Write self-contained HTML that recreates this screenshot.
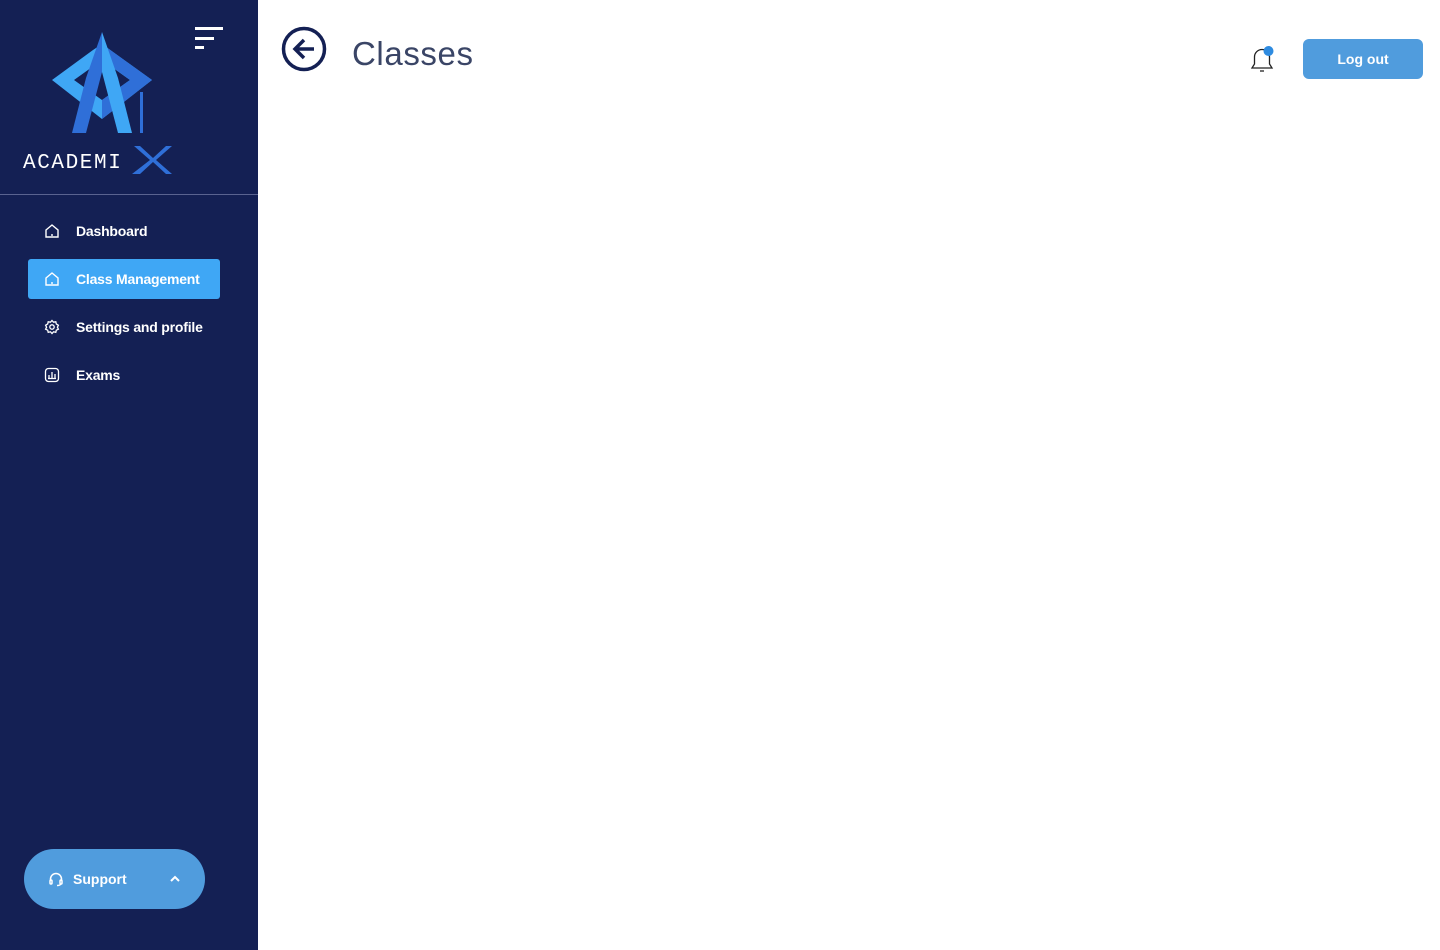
<!DOCTYPE html>
<html><head><style>
*{margin:0;padding:0;box-sizing:border-box}
body{width:1440px;height:950px;background:#fff;font-family:"Liberation Sans",sans-serif;position:relative;overflow:hidden}
.sb{position:absolute;left:0;top:0;width:258px;height:950px;background:#142054}
.hr{position:absolute;left:0;top:194px;width:258px;height:1px;background:#5a6390}
.item{position:absolute;left:28px;width:192px;height:40px;color:#fff;font-size:14px;font-weight:bold;display:flex;align-items:center;padding-left:16px;border-radius:3px;letter-spacing:-0.2px}
.item svg{margin-right:16px}
.act{background:#3fa7f5}
.sup{position:absolute;left:24px;top:849px;width:181px;height:60px;border-radius:30px;background:#509cdd;color:#fff;font-size:14px;font-weight:bold;display:flex;align-items:center;padding-left:24px}
.logout{position:absolute;left:1303px;top:39px;width:120px;height:40px;border-radius:6px;background:#509cdd;color:#fff;font-size:14px;font-weight:bold;display:flex;align-items:center;justify-content:center}
</style></head><body>
<div class="sb">
<svg width="258" height="194" style="position:absolute;left:0;top:0">
<rect x="195" y="27" width="28" height="3" fill="#fff"/><rect x="195" y="37" width="19" height="3" fill="#fff"/><rect x="195" y="46" width="9" height="3" fill="#fff"/>
<path fill-rule="evenodd" fill="#3fa7f5" d="M52 80L93 50L102 44L152 80L102 119ZM74 80L102 100L130 80L102 60Z"/>
<path fill="#2f6fd8" d="M102 44L152 80L102 119L102 100L130 80L108 64Z"/>
<path fill="#2f6fd8" d="M102 32L86 78L72 133H86L102 72Z"/>
<path fill="#3fa7f5" d="M102 32L118 78L132 133H118L102 72Z"/>
<rect x="140" y="92" width="3" height="41" fill="#2f6fd8"/>
<text x="23" y="168" fill="#fff" font-family="Liberation Mono,monospace" font-size="21" letter-spacing="1.6">ACADEMI</text>
<path fill="#2f6fd8" d="M134 146H140L153 158L166 146H172L156 160L172 174H166L153 162L140 174H132L150 160Z"/>
</svg>
<div class="hr"></div>
<div class="item" style="top:211px"><svg width="16" height="16" viewBox="0 0 16 16" fill="none" stroke="#fff" stroke-width="1.4"><path d="M2 7L8 2L14 7V14H2Z"/><path d="M8 11V13"/></svg>Dashboard</div>
<div class="item act" style="top:259px"><svg width="16" height="16" viewBox="0 0 16 16" fill="none" stroke="#fff" stroke-width="1.4"><path d="M2 7L8 2L14 7V14H2Z"/><path d="M8 11V13"/></svg>Class Management</div>
<div class="item" style="top:307px"><svg width="16" height="16" viewBox="0 0 16 16" fill="none" stroke="#fff" stroke-width="1.3"><circle cx="8" cy="8" r="2.2"/><path d="M8 1.5L9.5 3.2L11.8 2.8L12.3 5L14.4 6.2L13.4 8.2L14.4 10.2L12.3 11.2L11.8 13.3L9.5 12.8L8 14.5L6.5 12.8L4.2 13.3L3.7 11.2L1.6 10.2L2.6 8.2L1.6 6.2L3.7 5L4.2 2.8L6.5 3.2Z"/></svg>Settings and profile</div>
<div class="item" style="top:355px"><svg width="16" height="16" viewBox="0 0 16 16" fill="none" stroke="#fff" stroke-width="1.3"><rect x="1.5" y="1.5" width="13" height="13" rx="3"/><path d="M5 11V8M8 11V5M11 11V7M4 11.5H12"/></svg>Exams</div>
<div class="sup"><svg width="16" height="16" viewBox="0 0 16 16" fill="none" stroke="#fff" stroke-width="1.5" style="margin-right:9px"><path d="M2.5 10V8a5.5 5.5 0 0 1 11 0v2"/><rect x="2" y="9" width="2" height="4" rx="1"/><rect x="12" y="9" width="2" height="4" rx="1"/><path d="M13 13Q12 14.5 9 14.5"/></svg>Support<svg width="12" height="8" viewBox="0 0 12 8" style="margin-left:42px" fill="none" stroke="#fff" stroke-width="2"><path d="M2 6L6 2L10 6"/></svg></div>
</div>
<svg width="46" height="46" viewBox="0 0 46 46" style="position:absolute;left:281px;top:26px" fill="none" stroke="#142054" stroke-width="3.5"><circle cx="23" cy="23" r="20.5"/><path d="M23 14L14 23L23 32M14 23H33"/></svg>
<div style="position:absolute;left:352px;top:35px;font-size:33px;color:#3a4566;letter-spacing:0.6px">Classes</div>
<svg width="30" height="30" viewBox="0 0 30 30" style="position:absolute;left:1248px;top:42px" fill="none" stroke="#222" stroke-width="1.3"><path d="M4 26H24L21.5 22V15a7.5 7.5 0 0 0-15 0v7Z"/><path d="M12 29H16"/><circle cx="20.5" cy="9" r="5" fill="#2e8be0" stroke="none"/></svg>
<div class="logout">Log out</div>
</body></html>
